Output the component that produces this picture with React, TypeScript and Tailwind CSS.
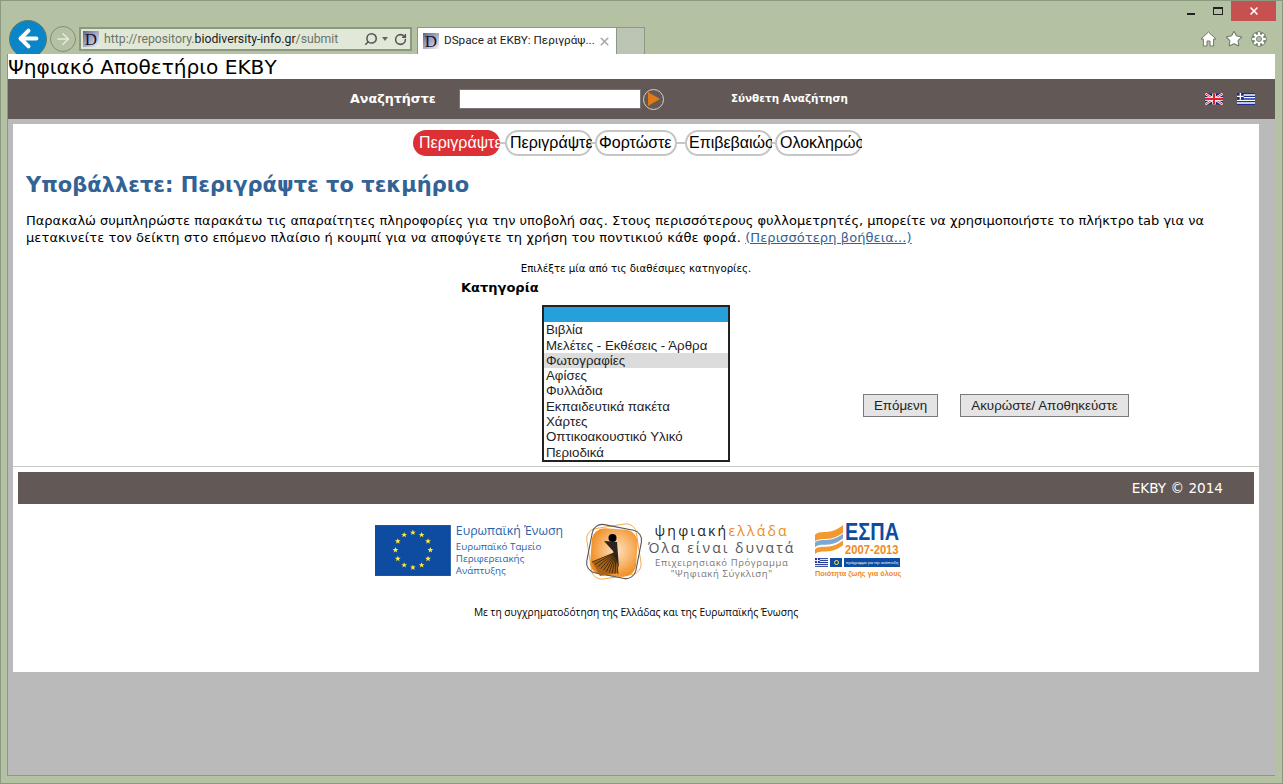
import { ArrowLeft, ArrowRight, RotateCw, Search, Star, X } from "lucide-react";

const steps = ["Περιγράψτε", "Περιγράψτε", "Φορτώστε", "Επιβεβαιώστε", "Ολοκληρώστε"];
const stepWidths = ["w-[87px]", "w-[87px]", "w-[82px]", "w-[87px]", "w-[87px]"];
const stepPads = ["pl-[6px]", "pl-[5px]", "pl-[4px]", "pl-[4px]", "pl-[5px]"];
const stepLines = ["w-[5px]", "w-[3px]", "w-[8px]", "w-[3px]"];

const categories = [
  "",
  "Βιβλία",
  "Μελέτες - Εκθέσεις - Άρθρα",
  "Φωτογραφίες",
  "Αφίσες",
  "Φυλλάδια",
  "Εκπαιδευτικά πακέτα",
  "Χάρτες",
  "Οπτικοακουστικό Υλικό",
  "Περιοδικά",
];

const DSpaceIcon = () => (
  <div className="w-4 h-4 shrink-0 bg-gradient-to-br from-[#62628a] to-[#f4f4f8] flex items-center justify-center font-['Liberation_Serif',serif] text-[17px] leading-none text-[#14142e]">
    D
  </div>
);

const HomeIcon = () => (
  <svg width="17" height="16" viewBox="0 0 17 16">
    <path
      d="M8.5 1L16 8H13.6V15H10V10H7V15H3.4V8H1Z"
      fill="#fff"
      stroke="#6f7a68"
      strokeWidth="1"
      strokeLinejoin="round"
    />
  </svg>
);

const teeth = [0, 45, 90, 135];

const GearIcon = () => (
  <svg width="16" height="16" viewBox="0 0 16 16">
    {teeth.map((a) => (
      <path key={a} d="M8 0.5V15.5" stroke="#6f7a68" strokeWidth="4" transform={`rotate(${a} 8 8)`} />
    ))}
    <circle cx="8" cy="8" r="5" fill="none" stroke="#6f7a68" strokeWidth="4.6" />
    {teeth.map((a) => (
      <path key={a} d="M8 1.2V14.8" stroke="#fff" strokeWidth="2.4" transform={`rotate(${a} 8 8)`} />
    ))}
    <circle cx="8" cy="8" r="4.6" fill="#fff" />
    <circle cx="8" cy="8" r="2.6" fill="#b4c1a3" stroke="#6f7a68" strokeWidth="0.8" />
  </svg>
);

const UkFlag = () => (
  <svg width="18" height="12" viewBox="0 0 60 36">
    <rect width="60" height="36" fill="#1a237b" />
    <path d="M0 0L60 36M60 0L0 36" stroke="#fff" strokeWidth="8" />
    <path d="M0 0L60 36M60 0L0 36" stroke="#e0202c" strokeWidth="3" />
    <path d="M30 0V36M0 18H60" stroke="#fff" strokeWidth="12" />
    <path d="M30 0V36M0 18H60" stroke="#e0202c" strokeWidth="7" />
  </svg>
);

const GreekFlag = ({ w = 18, h = 12 }: { w?: number; h?: number }) => (
  <svg width={w} height={h} viewBox="0 0 54 36">
    <rect width="54" height="36" fill="#fff" />
    <path d="M0 2H54M0 10H54M0 18H54M0 26H54M0 34H54" stroke="#1b2f8f" strokeWidth="4" />
    <rect width="20" height="20" fill="#1b2f8f" />
    <path d="M10 0V20M0 10H20" stroke="#fff" strokeWidth="4" />
  </svg>
);

const starPoints = Array.from({ length: 12 }, (_, i) => {
  const a = (i * Math.PI) / 6;
  return { x: 38 + Math.sin(a) * 17.5, y: 25 - Math.cos(a) * 17.5 };
});

const fanLines = Array.from({ length: 10 }, (_, i) => {
  const t = i / 9;
  return { x: 9 + t * 26, y: 41 + t * 12 - Math.sin(t * Math.PI) * -3 };
});

const EuLogo = () => (
  <div className="w-[188px] shrink-0 flex items-start gap-[5px]">
    <svg width="76" height="51" viewBox="0 0 76 51" className="mt-[3px]">
      <rect width="76" height="51" fill="#0e4ca1" />
      {starPoints.map((p, i) => (
        <polygon
          key={i}
          transform={`translate(${p.x} ${p.y})`}
          fill="#ffe93b"
          points="0,-3 0.8,-0.9 2.9,-0.9 1.2,0.4 1.8,2.5 0,1.2 -1.8,2.5 -1.2,0.4 -2.9,-0.9 -0.8,-0.9"
        />
      ))}
    </svg>
    <div className="text-[#2a62ab] font-['Open_Sans',sans-serif] whitespace-nowrap">
      <div className="text-[12.3px] leading-[17px] mb-[2px]">Ευρωπαϊκή Ένωση</div>
      <div className="text-[9.8px] leading-[12.2px]">
        Ευρωπαϊκό Ταμείο
        <br />
        Περιφερειακής
        <br />
        Ανάπτυξης
      </div>
    </div>
  </div>
);

const DigitalLogo = () => (
  <div className="w-[209px] shrink-0 flex items-start ml-[22px] -mt-[1px]">
    <svg width="60" height="60" viewBox="0 0 60 60" className="-ml-[2px] shrink-0">
      <defs>
        <radialGradient id="orangeFill" cx="0.55" cy="0.45" r="0.65">
          <stop offset="0" stopColor="#fde3c0" />
          <stop offset="0.55" stopColor="#f8b163" />
          <stop offset="1" stopColor="#ee8413" />
        </radialGradient>
      </defs>
      <rect x="8" y="8" width="46" height="47" rx="13" fill="url(#orangeFill)" transform="rotate(4 31 31)" />
      <rect x="6" y="5" width="50" height="51" rx="10" fill="none" stroke="#f29a2e" strokeWidth="0.8" transform="rotate(-9 31 31)" />
      <rect x="6" y="6" width="50" height="49" rx="10" fill="none" stroke="#555" strokeWidth="1.1" transform="rotate(11 31 31)" />
      <circle cx="29.5" cy="17" r="4" fill="#000" />
      <path d="M33 31L9 41L17 55L35 52Z" fill="#a8641c" />
      {fanLines.map((p, i) => (
        <path key={i} d={`M33 31L${p.x} ${p.y}`} stroke="#2b1c08" strokeWidth="0.8" />
      ))}
      <path d="M21 20L34 21L36 47L30 30Z" fill="#2b2420" />
    </svg>
    <div className="ml-[5px] mt-[1px] text-center font-['Open_Sans',sans-serif] whitespace-nowrap">
      <div className="text-[14px] leading-[17px] tracking-[2.2px]">
        <span className="text-[#222]">ψηφιακή</span>
        <span className="text-[#f08a1d]">ελλάδα</span>
      </div>
      <div className="text-[14px] leading-[17px] tracking-[2px] text-[#555]">Όλα είναι δυνατά</div>
      <div className="text-[9.5px] leading-[11px] tracking-[0.6px] text-[#777] mt-[1px]">
        Επιχειρησιακό Πρόγραμμα
        <br />
        "Ψηφιακή Σύγκλιση"
      </div>
    </div>
  </div>
);

const EspaLogo = () => (
  <div className="w-[85px] shrink-0 ml-[21px] font-['Liberation_Sans',sans-serif]">
    <div className="flex h-[36px]">
      <svg width="28" height="30" viewBox="0 0 29 31" className="shrink-0 mt-[3px]">
        <path d="M0 10C8 4 14 12 29 0V8C14 19 8 11 0 17Z" fill="#f29a2e" />
        <path d="M0 18C8 12 14 20 29 9V14C14 25 8 17 0 23Z" fill="#7fa7d6" />
        <path d="M0 25C8 19 14 27 29 16V21C14 32 8 24 0 30Z" fill="#f29a2e" />
      </svg>
      <div className="ml-[2px] -mt-[2px] origin-top-left scale-x-[0.83]">
        <div className="text-[24px] leading-[23px] font-bold text-[#0e4ca1]">ΕΣΠΑ</div>
        <div className="text-[13.5px] leading-[14px] font-bold text-[#f08a1d] whitespace-nowrap">2007-2013</div>
      </div>
    </div>
    <div className="flex items-center gap-[2px] h-[9px]">
      <GreekFlag w={13} h={9} />
      <div className="w-[12px] h-[9px] bg-[#0e4ca1] flex items-center justify-center">
        <div className="w-[5px] h-[5px] rounded-full border border-[#ffe93b]" />
      </div>
      <div className="flex-1 h-[9px] bg-[#0e4ca1] text-white text-[4px] leading-[9px] whitespace-nowrap text-center">
        πρόγραμμα για την ανάπτυξη
      </div>
    </div>
    <div className="text-[7.3px] leading-[11px] font-bold text-[#f08a1d] whitespace-nowrap mt-[1px]">Ποιότητα ζωής για όλους</div>
  </div>
);

const App = () => {
  return (
    <div className="w-[1283px] h-[784px] flex flex-col bg-[#b4c1a3] border border-[#8a9a80] font-['DejaVu_Sans',sans-serif] overflow-hidden">
      {/* browser chrome */}
      <div className="h-[53px] shrink-0 flex items-start overflow-hidden">
        <div className="ml-[8px] mt-[19px] shrink-0 w-[38px] h-[38px] rounded-full bg-[#0a86c8] border border-[#5d7a6a] flex items-center justify-center">
          <ArrowLeft size={27} strokeWidth={3.5} className="text-white -mt-[1px]" />
        </div>
        <div className="ml-[3px] mt-[25px] shrink-0 w-[26px] h-[26px] rounded-full border border-[#7f8f78] flex items-center justify-center">
          <ArrowRight size={18} strokeWidth={1.8} className="text-[#e8ece0]" />
        </div>
        <div className="ml-[3px] mt-[26px] w-[333px] h-[24px] bg-[#e1e8d8] border-2 border-[#8a9a80] flex items-center pl-[2px] pr-[3px] font-['Roboto',sans-serif] text-[12.25px] text-[#6b7468]">
          <DSpaceIcon />
          <span className="ml-[5px] whitespace-nowrap">
            http://repository.<span className="text-[#222]">biodiversity-info.gr</span>/submit
          </span>
          <div className="ml-auto flex items-center gap-[4px] text-[#555]">
            <Search size={14} strokeWidth={2.6} className="-scale-x-100" />
            <div className="w-0 h-0 border-x-[3px] border-x-transparent border-t-[4px] border-t-[#666]" />
            <RotateCw size={13} strokeWidth={2.8} className="ml-[2px]" />
          </div>
        </div>
        <div className="ml-[5px] mt-[26px] w-[200px] h-[27px] bg-white border border-[#8a9a80] border-b-0 flex items-center pl-[5px] pr-[5px] font-['Roboto',sans-serif] text-[11.7px] text-[#222]">
          <DSpaceIcon />
          <span className="ml-[5px] whitespace-nowrap">DSpace at EKBY: Περιγράψ...</span>
          <X size={13} strokeWidth={3} className="ml-auto text-[#a8a8a8]" />
        </div>
        <div className="mt-[26px] w-[28px] h-[27px] bg-[#bcc4b3] border border-[#8a9a80] border-l-0 border-b-0" />
        <div className="ml-auto flex flex-col items-end">
          <div className="flex items-start">
            <div className="w-[8px] mt-[12px] mr-[18px] border-t-2 border-[#222]" />
            <div className="w-[10px] h-[8px] mt-[6px] mr-[8px] border border-t-2 border-[#222]" />
            <div className="w-[45px] h-[20px] bg-[#c75050] mr-[6px] flex items-center justify-center">
              <X size={12} strokeWidth={3.2} className="text-white" />
            </div>
          </div>
          <div className="flex items-center gap-[8px] mt-[9px] mr-[15px]">
            <HomeIcon />
            <Star size={18} strokeWidth={1.4} className="text-[#6f7a68] fill-white" />
            <GearIcon />
          </div>
        </div>
      </div>

      {/* page */}
      <div className="flex-1 ml-[6px] mr-[7px] mb-[7px] bg-[#bababa] border-l border-[#8a9a80] border-b flex flex-col min-h-0">
        <div className="h-[25px] bg-white text-black text-[20.1px] leading-[27px] whitespace-nowrap overflow-hidden">Ψηφιακό Αποθετήριο ΕΚΒΥ</div>
        <div className="h-[40px] bg-[#625856] flex items-center text-white font-bold">
          <span className="ml-[342px] text-[12.7px]">Αναζητήστε</span>
          <div className="ml-[23px] w-[182px] h-[20px] bg-white border border-[#777]" />
          <div className="ml-[2px] w-[21px] h-[21px] rounded-full border border-[#d8d0c8] flex items-center justify-center">
            <div className="ml-[2px] w-0 h-0 border-y-[7px] border-y-transparent border-l-[12px] border-l-[#e07a14]" />
          </div>
          <span className="ml-[67px] text-[10.4px]">Σύνθετη Αναζήτηση</span>
          <div className="ml-auto mr-[20px] flex items-center gap-[14px]">
            <UkFlag />
            <GreekFlag />
          </div>
        </div>

        <div className="ml-[5px] mt-[5px] w-[1246px] h-[548px] bg-white flex flex-col">
          <div className="flex items-center justify-center mt-[6px] pl-[3px]">
            {steps.map((s, i) => (
              <div key={i} className="flex items-center">
                <div className={`${stepWidths[i]} relative h-[26px] overflow-hidden flex items-center whitespace-nowrap font-['Liberation_Sans',sans-serif] text-[16px]`}>
                  <div className={`absolute inset-0 rounded-full ${i === 0 ? "bg-[#dc3034]" : "bg-white border-2 border-[#c6c6c6]"}`} />
                  <span className={`relative ${stepPads[i]} ${i === 0 ? "text-white" : "text-black"}`}>{s}</span>
                </div>
                {i < 4 && <div className={`${stepLines[i]} h-[2px] bg-[#c6c6c6]`} />}
              </div>
            ))}
          </div>

          <h1 className="mt-[16px] ml-[13px] text-[21px] leading-[27px] font-bold text-[#336295]">Υποβάλλετε: Περιγράψτε το τεκμήριο</h1>
          <p className="mt-[14px] ml-[13px] text-[13px] leading-[16.5px] text-black whitespace-nowrap">
            Παρακαλώ συμπληρώστε παρακάτω τις απαραίτητες πληροφορίες για την υποβολή σας. Στους περισσότερους φυλλομετρητές, μπορείτε να χρησιμοποιήστε το πλήκτρο tab για να
            <br />
            <span className="tracking-[0.09px]">
              μετακινείτε τον δείκτη στο επόμενο πλαίσιο ή κουμπί για να αποφύγετε τη χρήση του ποντικιού κάθε φορά.{" "}
              <a className="text-[#336295] underline">(Περισσότερη βοήθεια...)</a>
            </span>
          </p>

          <div className="mt-[16px] text-center text-[10.2px] leading-[14px] text-black">Επιλέξτε μία από τις διαθέσιμες κατηγορίες.</div>
          <div className="mt-[4px] ml-[448px] text-[13px] leading-[16px] font-bold text-black">Κατηγορία</div>

          <div className="flex mt-[9px] ml-[529px]">
            <div className="w-[188px] h-[157px] border-2 border-[#222] bg-white font-['Liberation_Sans',sans-serif] text-[13.3px] leading-[15.3px] text-[#222]">
              {categories.map((c, i) => (
                <div key={i} className={`h-[15.3px] pl-[2px] whitespace-nowrap ${i === 0 ? "bg-[#26a0da]" : i === 3 ? "bg-[#dcdcdc]" : ""}`}>
                  {c}
                </div>
              ))}
            </div>
            <div className="flex items-start gap-[22px] ml-[133px] mt-[89px] font-['Liberation_Sans',sans-serif] text-[13.33px] text-[#222]">
              <button className="w-[75px] h-[23px] bg-[#e4e4e4] border border-[#7a7a7a]">Επόμενη</button>
              <button className="w-[169px] h-[23px] bg-[#e4e4e4] border border-[#7a7a7a] whitespace-nowrap">Ακυρώστε/ Αποθηκεύστε</button>
            </div>
          </div>

          <div className="mt-[4px] h-px bg-[#c8c8c8]" />
          <div className="mt-[5px] mx-[5px] h-[32px] bg-[#625856] flex items-center justify-end pr-[31px] text-white text-[13.6px]">EKBY © 2014</div>

          <div className="flex items-start ml-[362px] mt-[18px] h-[60px]">
            <EuLogo />
            <DigitalLogo />
            <EspaLogo />
          </div>
          <div className="mt-[23px] text-center font-['Open_Sans',sans-serif] text-[10.2px] leading-[14px] text-black">
            Με τη συγχρηματοδότηση της Ελλάδας και της Ευρωπαϊκής Ένωσης
          </div>
        </div>
      </div>
    </div>
  );
};

export default App;
